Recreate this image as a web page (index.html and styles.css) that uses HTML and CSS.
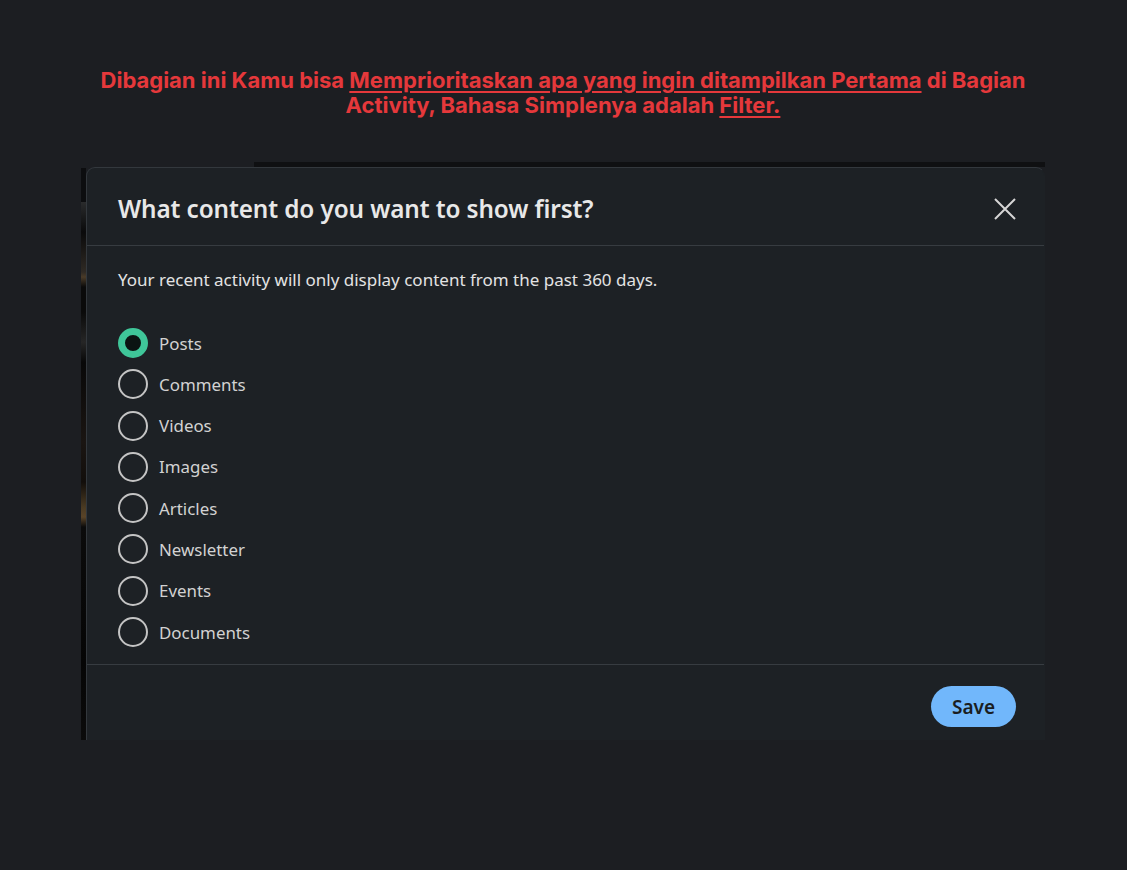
FILE: index.html
```html
<!DOCTYPE html>
<html lang="en">
<head>
<meta charset="utf-8">
<title>What content do you want to show first?</title>
<link rel="stylesheet" href="styles.css">
</head>
<body>
<div class="page">
  <p class="note">Dibagian ini Kamu bisa <u>Memprioritaskan apa yang ingin ditampilkan Pertama</u> di Bagian<br>Activity, Bahasa Simplenya adalah <u>Filter.</u></p>

  <div class="shot">
    <div class="strip"></div>
    <div class="shot-main">
      <div class="topbar"></div>
      <section class="modal">
        <header class="modal-head">
          <h1 class="modal-title">What content do you want to show first?</h1>
          <button class="close" aria-label="Close">
            <svg width="24" height="24" viewBox="0 0 24 24"><path d="M2 2 L22 22 M22 2 L2 22" stroke="#d6d6d6" stroke-width="2" fill="none"/></svg>
          </button>
        </header>
        <div class="modal-body">
          <p class="desc">Your recent activity will only display content from the past 360 days.</p>
          <ul class="options">
            <li class="option checked"><span class="radio"></span><span class="label">Posts</span></li>
            <li class="option"><span class="radio"></span><span class="label">Comments</span></li>
            <li class="option"><span class="radio"></span><span class="label">Videos</span></li>
            <li class="option"><span class="radio"></span><span class="label">Images</span></li>
            <li class="option"><span class="radio"></span><span class="label">Articles</span></li>
            <li class="option"><span class="radio"></span><span class="label">Newsletter</span></li>
            <li class="option"><span class="radio"></span><span class="label">Events</span></li>
            <li class="option"><span class="radio"></span><span class="label">Documents</span></li>
          </ul>
        </div>
        <footer class="modal-foot">
          <button class="save">Save</button>
        </footer>
      </section>
    </div>
  </div>
</div>
</body>
</html>
```

FILE: styles.css
```css
* { box-sizing: border-box; }
html, body { margin: 0; padding: 0; }
body {
  background: #1c1e22;
  width: 1127px;
  height: 870px;
  overflow: hidden;
}
.page {
  padding-top: 68px;
}
.note {
  margin: 0;
  text-align: center;
  font-family: Inter, "Liberation Sans", sans-serif;
  font-weight: 700;
  font-size: 22px;
  line-height: 25px;
  color: #e5383b;
  padding-right: 1px;
}
.note u {
  text-decoration-thickness: 2px;
  text-underline-offset: 3px;
}
.shot {
  margin: 44px 0 0 81px;
  width: 964px;
  height: 578px;
  display: flex;
}
.strip {
  width: 5px;
  flex: none;
  background: linear-gradient(to bottom,
    #1c1e22 0, #1c1e22 6px,
    #0c0d0f 6px, #0c0d0f 40px,
    #2a2b2c 40px, #141516 60px,
    #0a0a0b 70px, #2f2a24 110px,
    #4a3b28 115px, #0a0a0a 125px,
    #0a0a0a 150px, #262626 180px,
    #080808 200px, #1a1512 280px,
    #120e0b 320px, #4a3a22 345px,
    #5a4428 355px, #0b0b0b 365px,
    #050505 500px, #0b0b0b 578px);
}
.shot-main {
  flex: 1;
  display: flex;
  flex-direction: column;
}
.topbar {
  height: 5px;
  flex: none;
  background: linear-gradient(to right, #1c1e22 0, #1c1e22 168px, #0f1012 168px, #0f1012 100%);
}
.modal {
  flex: 1;
  background: #1d2125;
  border: 1px solid #33383d;
  border-bottom: none;
  border-right-color: #1d2125;
  border-radius: 9px 9px 0 0;
  display: flex;
  flex-direction: column;
  font-family: "Noto Sans", "Open Sans", sans-serif;
}
.modal-head {
  height: 78px;
  flex: none;
  display: flex;
  align-items: center;
  justify-content: space-between;
  padding: 0 27px 0 31px;
  border-bottom: 1px solid #373c41;
}
.modal-title {
  margin: 3px 0 0;
  font-size: 24.3px;
  font-weight: 600;
  color: #e8e8e8;
  letter-spacing: -0.1px;
}
.close {
  background: none;
  border: 0;
  padding: 0;
  width: 24px;
  height: 24px;
  display: flex;
  margin-top: 4px;
}
.modal-body {
  flex: none;
  height: 419px;
  padding: 20px 31px 0;
  border-bottom: 1px solid #373c41;
}
.desc {
  margin: 0;
  font-size: 17px;
  line-height: 28px;
  color: #e3e3e3;
}
.options {
  list-style: none;
  margin: 34px 0 0;
  padding: 0;
  display: flex;
  flex-direction: column;
  gap: 11.3px;
}
.option {
  display: flex;
  align-items: center;
  height: 30px;
  gap: 11px;
}
.radio {
  width: 30px;
  height: 30px;
  border-radius: 50%;
  border: 2px solid #c4c4c4;
  flex: none;
}
.option.checked .radio {
  border: 7px solid #3fc699;
  background: #0b1412;
}
.label {
  font-size: 16.9px;
  color: #d2d2d2;
}
.modal-foot {
  flex: 1;
  display: flex;
  justify-content: flex-end;
  align-items: flex-start;
  padding: 21px 28px 0;
}
.save {
  width: 85px;
  height: 41px;
  border: 0;
  border-radius: 21px;
  background: #71b7fb;
  color: #1a1d21;
  font-family: "Noto Sans", "Open Sans", sans-serif;
  font-weight: 600;
  font-size: 19px;
  padding: 0;
}
```
